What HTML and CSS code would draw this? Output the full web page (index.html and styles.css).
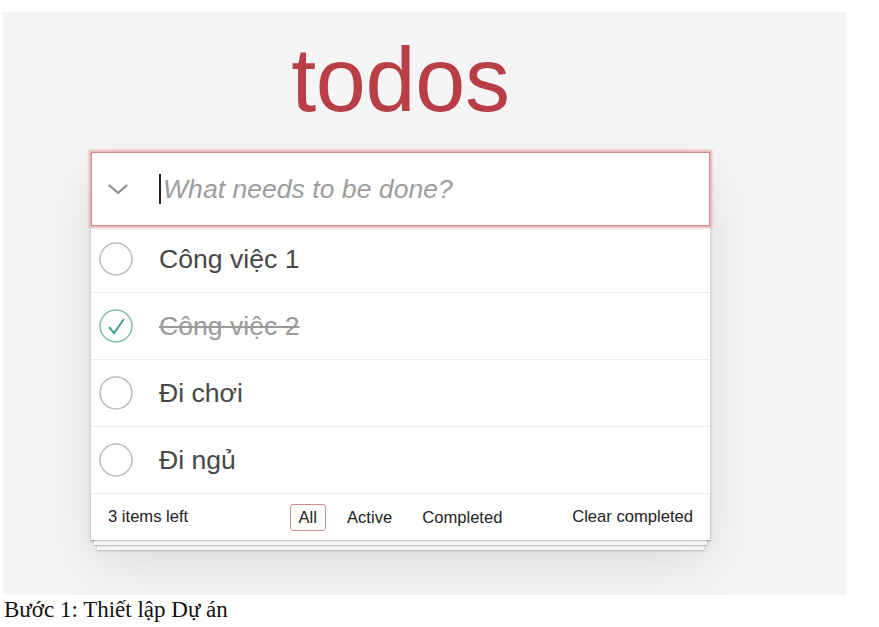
FILE: index.html
```html
<!DOCTYPE html>
<html lang="vi">
<head>
<meta charset="utf-8">
<title>todos</title>
<link rel="stylesheet" href="styles.css">
</head>
<body>
<div class="shot">
  <div class="app-col">
    <h1 class="title">todos</h1>
    <section class="todoapp">
      <div class="header">
        <svg class="toggle" width="20" height="11" viewBox="0 0 20 11"><path d="M1.5 1.5 L10 9 L18.5 1.5" fill="none" stroke="#8c8c8c" stroke-width="2.2" stroke-linecap="round" stroke-linejoin="round"/></svg>
        <span class="caret"></span>
        <span class="placeholder">What needs to be done?</span>
      </div>
      <ul class="list">
        <li class="item">
          <svg class="check" width="34" height="34" viewBox="0 0 34 34"><circle cx="17" cy="17" r="16" fill="none" stroke="#bdbdbd" stroke-width="1.5"/></svg>
          <span class="label">Công việc 1</span>
        </li>
        <li class="item done">
          <svg class="check" width="34" height="34" viewBox="0 0 34 34"><circle cx="17" cy="17" r="16" fill="none" stroke="#82bfb1" stroke-width="1.5"/><path d="M10 18 L15 24 L25 10" fill="none" stroke="#3ea390" stroke-width="2"/></svg>
          <span class="label">Công việc 2</span>
        </li>
        <li class="item">
          <svg class="check" width="34" height="34" viewBox="0 0 34 34"><circle cx="17" cy="17" r="16" fill="none" stroke="#bdbdbd" stroke-width="1.5"/></svg>
          <span class="label">Đi chơi</span>
        </li>
        <li class="item">
          <svg class="check" width="34" height="34" viewBox="0 0 34 34"><circle cx="17" cy="17" r="16" fill="none" stroke="#bdbdbd" stroke-width="1.5"/></svg>
          <span class="label">Đi ngủ</span>
        </li>
      </ul>
      <footer class="footer">
        <span class="count">3 items left</span>
        <ul class="filters">
          <li><a class="selected">All</a></li>
          <li><a>Active</a></li>
          <li><a>Completed</a></li>
        </ul>
        <span class="clear">Clear completed</span>
      </footer>
    </section>
  </div>
</div>
<p class="caption">Bước 1: Thiết lập Dự án</p>
</body>
</html>
```
FILE: styles.css
```css
body {
  margin: 0;
  background: #ffffff;
  font-family: "Liberation Sans", Arial, sans-serif;
}

.shot {
  margin: 12px 0 0 3px;
  width: 843px;
  height: 583px;
  box-sizing: border-box;
  padding-left: 88px;
  background: #f5f5f5;
  overflow: hidden;
}

.app-col {
  width: 619px;
}

.title {
  margin: 0 0 27px;
  padding-top: 23px;
  height: 90px;
  font-size: 90px;
  line-height: 90px;
  font-weight: normal;
  text-align: center;
  color: #b83f45;
  letter-spacing: -0.3px;
}

.todoapp {
  background: #fff;
  box-shadow: 0 2px 4px rgba(0, 0, 0, 0.2), 0 25px 50px rgba(0, 0, 0, 0.1);
}

.header {
  height: 74px;
  box-sizing: border-box;
  border: 1px solid #d48a8a;
  box-shadow: 0 0 2px 2px #e9b6b6;
  display: flex;
  align-items: center;
  position: relative;
}

.toggle {
  margin-left: 16px;
  margin-right: 31px;
  flex: none;
}

.caret {
  width: 2px;
  height: 30px;
  background: #222;
  flex: none;
}

.placeholder {
  margin-left: 2px;
  font-size: 26.6px;
  font-style: italic;
  color: #9d9d9d;
}

.list {
  list-style: none;
  margin: 0;
  padding: 0;
}

.item {
  height: 67px;
  box-sizing: border-box;
  border-bottom: 1px solid #ededed;
  display: flex;
  align-items: center;
}

.check {
  margin-left: 8px;
  flex: none;
}

.label {
  margin-left: 26px;
  font-size: 26.6px;
  color: #484848;
}

.done .label {
  color: #9a9a9a;
  text-decoration: line-through;
}

.footer {
  position: relative;
  height: 46px;
  box-sizing: border-box;
  padding: 0 17px;
  display: grid;
  grid-template-columns: 1fr auto 1fr;
  align-items: center;
  font-size: 16.6px;
  color: #222;
}

.footer::before {
  content: "";
  position: absolute;
  left: 0;
  right: 0;
  bottom: 0;
  height: 46px;
  box-shadow: 0 1px 1px rgba(0, 0, 0, 0.2), 0 8px 0 -3px #f6f6f6, 0 9px 1px -3px rgba(0, 0, 0, 0.2), 0 16px 0 -6px #f6f6f6, 0 17px 2px -6px rgba(0, 0, 0, 0.2);
}

.filters {
  list-style: none;
  margin: 0;
  padding: 0;
  display: flex;
  gap: 12px;
}

.filters a {
  display: block;
  padding: 3px 8px;
  line-height: 19px;
  border: 1px solid transparent;
  border-radius: 3px;
}

.filters a.selected {
  border-color: #d98a8a;
}

.clear {
  justify-self: end;
}

.caption {
  margin: 2px 0 0 4px;
  font-family: "Liberation Serif", "Times New Roman", serif;
  font-size: 23px;
  color: #111;
}
```
